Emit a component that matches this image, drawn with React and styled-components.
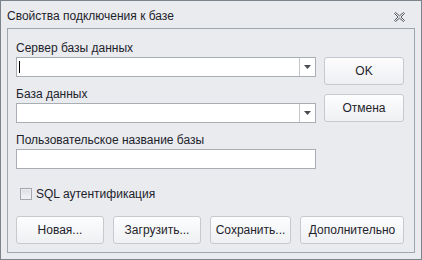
import React from "react";
import styled, { createGlobalStyle } from "styled-components";

const GlobalStyle = createGlobalStyle`
    html, body {
        margin: 0;
        padding: 0;
        background: #e9ebef;
    }
    * {
        box-sizing: border-box;
    }
`;

const StyledWindow = styled.div`
    width: 422px;
    height: 260px;
    display: flex;
    flex-direction: column;
    background: #e9ebef;
    border: 1px solid #7c838b;
    font-family: "Liberation Sans", Arial, sans-serif;
    font-size: 12px;
    color: #1e232b;
`;

const StyledTitleBar = styled.div`
    height: 27px;
    display: flex;
    align-items: center;
    justify-content: space-between;
    padding: 2px 16px 0 6px;
    font-size: 12px;
`;

const StyledClose = styled.span`
    display: flex;
    margin-top: 3px;
`;

const StyledPanel = styled.div`
    flex: 1;
    margin: 0 6px 6px 6px;
    border: 1px solid #a0a6ad;
    padding: 12px 9px 8px 8px;
    display: flex;
    flex-direction: column;
`;

const StyledTop = styled.div`
    display: flex;
    gap: 8px;
`;

const StyledFields = styled.div`
    width: 300px;
    display: flex;
    flex-direction: column;
`;

const StyledField = styled.div`
    display: flex;
    flex-direction: column;
    margin-bottom: ${(p) => (p.last ? "0" : "10px")};
`;

const StyledLabel = styled.label`
    display: block;
    height: 14px;
    line-height: 14px;
    margin-bottom: 2px;
`;

const StyledInput = styled.div`
    position: relative;
    height: 20px;
    display: flex;
    border: 1px solid #a9aeb5;
    background: #fff;
`;

const StyledCaret = styled.span`
    position: absolute;
    left: 2px;
    top: 3px;
    width: 1px;
    height: 12px;
    background: #000;
`;

const StyledDrop = styled.div`
    margin-left: auto;
    width: 16px;
    height: 100%;
    border-left: 1px solid #c4c8cd;
    display: flex;
    align-items: center;
    justify-content: center;
`;

const StyledSide = styled.div`
    width: 80px;
    padding-top: 16px;
    display: flex;
    flex-direction: column;
    gap: 9px;
`;

const StyledButton = styled.button`
    width: ${(p) => p.w || 80}px;
    height: 28px;
    padding: 0;
    border: 1px solid #c6cace;
    border-radius: 3px;
    background: linear-gradient(#fdfdfe, #eef0f3);
    font-family: inherit;
    font-size: 12px;
    color: #1e232b;
`;

const StyledCheckRow = styled.div`
    display: flex;
    align-items: center;
    gap: 4px;
    margin: 19px 0 0 4px;
    height: 12px;
`;

const StyledBox = styled.span`
    width: 12px;
    height: 12px;
    border: 1px solid #a4a8ae;
    background: linear-gradient(#d9dce0, #f3f4f6);
    box-shadow: inset 0 0 0 1px #eceef1;
`;

const StyledFooter = styled.div`
    margin-top: auto;
    display: flex;
    gap: 9px;
`;

const Arrow = () => (
    <svg width="7" height="4" viewBox="0 0 7 4">
        <polygon points="0,0 7,0 3.5,4" fill="#4a4d52" />
    </svg>
);

const CloseIcon = () => (
    <svg width="11" height="10" viewBox="0 0 11 10">
        <polygon
            points="0.5,1.5 1.5,0.5 5.5,3.8 9.5,0.5 10.5,1.5 7,5 10.5,8.5 9.5,9.5 5.5,6.2 1.5,9.5 0.5,8.5 4,5"
            fill="none"
            stroke="#555a60"
            strokeWidth="1"
        />
    </svg>
);

const Combo = ({ caret }) => (
    <StyledInput>
        {caret && <StyledCaret />}
        <StyledDrop>
            <Arrow />
        </StyledDrop>
    </StyledInput>
);

const App = () => {
    return (
        <>
            <GlobalStyle />
            <StyledWindow>
                <StyledTitleBar>
                    <span>Свойства подключения к базе</span>
                    <StyledClose>
                        <CloseIcon />
                    </StyledClose>
                </StyledTitleBar>
                <StyledPanel>
                    <StyledTop>
                        <StyledFields>
                            <StyledField>
                                <StyledLabel>Сервер базы данных</StyledLabel>
                                <Combo caret />
                            </StyledField>
                            <StyledField>
                                <StyledLabel>База данных</StyledLabel>
                                <Combo />
                            </StyledField>
                            <StyledField last>
                                <StyledLabel>Пользовательское название базы</StyledLabel>
                                <StyledInput />
                            </StyledField>
                        </StyledFields>
                        <StyledSide>
                            <StyledButton>OK</StyledButton>
                            <StyledButton>Отмена</StyledButton>
                        </StyledSide>
                    </StyledTop>
                    <StyledCheckRow>
                        <StyledBox />
                        <span>SQL аутентификация</span>
                    </StyledCheckRow>
                    <StyledFooter>
                        <StyledButton w={88}>Новая...</StyledButton>
                        <StyledButton w={88}>Загрузить...</StyledButton>
                        <StyledButton w={81}>Сохранить...</StyledButton>
                        <StyledButton w={104}>Дополнительно</StyledButton>
                    </StyledFooter>
                </StyledPanel>
            </StyledWindow>
        </>
    );
};

export default App;
